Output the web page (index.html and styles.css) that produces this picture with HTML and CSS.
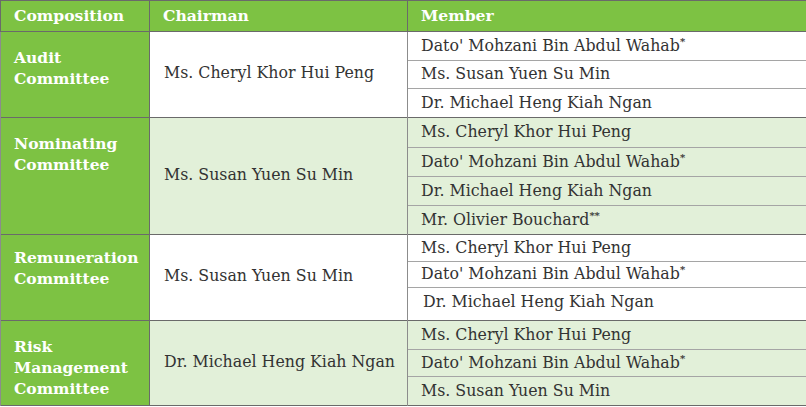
FILE: index.html
```html
<!DOCTYPE html>
<html>
<head>
<meta charset="utf-8">
<link rel="stylesheet" href="styles.css">
</head>
<body>
<table class="board">
  <colgroup>
    <col class="c1"><col class="c2"><col class="c3">
  </colgroup>
  <thead>
    <tr class="head">
      <th>Composition</th><th>Chairman</th><th>Member</th>
    </tr>
  </thead>
  <tbody class="grp white">
    <tr class="r29"><td class="comp" rowspan="3">Audit<br>Committee</td><td class="chair" rowspan="3">Ms. Cheryl Khor Hui Peng</td><td class="mem">Dato' Mohzani Bin Abdul Wahab<sup>*</sup></td></tr>
    <tr class="r28"><td class="mem">Ms. Susan Yuen Su Min</td></tr>
    <tr class="r29"><td class="mem">Dr. Michael Heng Kiah Ngan</td></tr>
  </tbody>
  <tbody class="grp tint">
    <tr class="r30"><td class="comp" rowspan="4">Nominating<br>Committee</td><td class="chair" rowspan="4">Ms. Susan Yuen Su Min</td><td class="mem">Ms. Cheryl Khor Hui Peng</td></tr>
    <tr class="r29"><td class="mem">Dato' Mohzani Bin Abdul Wahab<sup>*</sup></td></tr>
    <tr class="r29"><td class="mem">Dr. Michael Heng Kiah Ngan</td></tr>
    <tr class="r29"><td class="mem">Mr. Olivier Bouchard<sup>**</sup></td></tr>
  </tbody>
  <tbody class="grp white">
    <tr class="r27"><td class="comp rem" rowspan="3">Remuneration<br>Committee</td><td class="chair" rowspan="3">Ms. Susan Yuen Su Min</td><td class="mem">Ms. Cheryl Khor Hui Peng</td></tr>
    <tr class="r26"><td class="mem">Dato' Mohzani Bin Abdul Wahab<sup>*</sup></td></tr>
    <tr class="r33"><td class="mem indent">Dr. Michael Heng Kiah Ngan</td></tr>
  </tbody>
  <tbody class="grp tint">
    <tr class="r29"><td class="comp" rowspan="3">Risk<br>Management<br>Committee</td><td class="chair" rowspan="3">Dr. Michael Heng Kiah Ngan</td><td class="mem">Ms. Cheryl Khor Hui Peng</td></tr>
    <tr class="r27"><td class="mem">Dato' Mohzani Bin Abdul Wahab<sup>*</sup></td></tr>
    <tr class="r29"><td class="mem">Ms. Susan Yuen Su Min</td></tr>
  </tbody>
</table>
</body>
</html>
```
FILE: styles.css
```css
html, body {
  margin: 0;
  padding: 0;
  background: #ffffff;
}
.board {
  border-collapse: collapse;
  table-layout: fixed;
  width: 806px;
  font-family: "DejaVu Serif", Georgia, serif;
  font-size: 15.8px;
  color: #333333;
  border: 1px solid #6a6a6a;
}
.c1 { width: 149px; }
.c2 { width: 258px; }
.c3 { width: 399px; }
.head th {
  height: 28px;
  background: #7dc243;
  color: #ffffff;
  font-weight: bold;
  font-size: 15.6px;
  text-align: left;
  padding: 0 0 2px 13px;
  border: 1px solid #6a6a6a;
  vertical-align: middle;
}
.grp { border-top: 1px solid #6a6a6a; }
.white td.chair, .white td.mem { background: #ffffff; }
.tint td.chair, .tint td.mem { background: #e2f0d9; }
td {
  padding: 0;
  border-left: 1px solid #8c8c8c;
  border-right: 1px solid #8c8c8c;
}
td.comp {
  background: #7dc243;
  color: #ffffff;
  font-weight: bold;
  font-size: 15.5px;
  vertical-align: top;
  padding: 15px 0 0 13px;
  line-height: 21px;
  border-right: 1px solid #6a6a6a;
}
td.comp.rem { padding-top: 12px; }
td.chair {
  vertical-align: middle;
  padding: 0 0 4px 14px;
  white-space: nowrap;
}
td.mem {
  padding: 0 0 2px 13px;
  border-top: 1px solid #a5a5a5;
  vertical-align: middle;
  white-space: nowrap;
}
td.mem.indent { padding-left: 15px; padding-bottom: 6px; }
.grp tr:first-child td { border-top: 1px solid #6a6a6a; }
sup {
  font-size: 10px;
  font-weight: bold;
  vertical-align: top;
  line-height: 1;
  position: relative;
  top: 1px;
}
.r26 { height: 26px; }
.r27 { height: 27px; }
.r28 { height: 28px; }
.r29 { height: 29px; }
.r30 { height: 30px; }
.r33 { height: 33px; }
```
